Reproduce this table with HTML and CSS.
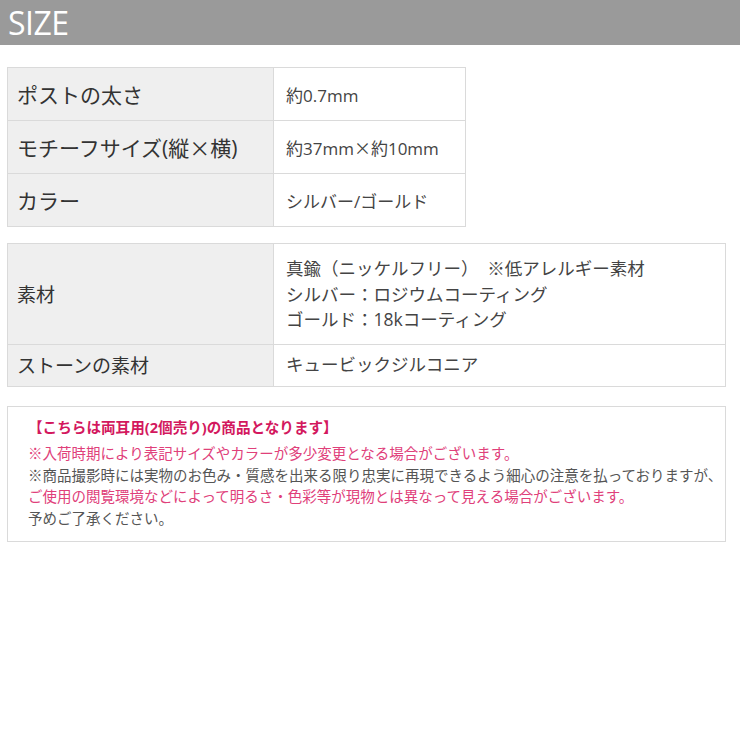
FILE: index.html
```html
<!DOCTYPE html>
<html lang="ja">

<head>
    <meta charset="UTF-8" />
    <meta name="viewport" content="width=device-width, initial-scale=1.0" />
    <title>SIZE</title>
    <link rel="stylesheet" href="styles.css">
</head>

<body>
    <h2 class="heading">SIZE</h2>

    <div class="content">
        <table class="spec spec-size">
            <tr>
                <th>ポストの太さ</th>
                <td>約0.7mm</td>
            </tr>
            <tr>
                <th>モチーフサイズ(縦<span class="cjk">×</span>横)</th>
                <td>約37mm<span class="cjk">×</span>約10mm</td>
            </tr>
            <tr>
                <th>カラー</th>
                <td>シルバー/ゴールド</td>
            </tr>
        </table>

        <table class="spec spec-material">
            <tr>
                <th>素材</th>
                <td class="multi">真鍮（ニッケルフリー）　※低アレルギー素材<br>シルバー：ロジウムコーティング<br>ゴールド：18kコーティング</td>
            </tr>
            <tr>
                <th>ストーンの素材</th>
                <td>キュービックジルコニア</td>
            </tr>
        </table>

        <div class="notes">
            <p class="notes-title">【こちらは両耳用(2個売り)の商品となります】</p>
            <p class="pink">※入荷時期により表記サイズやカラーが多少変更となる場合がございます。</p>
            <p>※商品撮影時には実物のお色み・質感を出来る限り忠実に再現できるよう細心の注意を払っておりますが、</p>
            <p class="pink">ご使用の閲覧環境などによって明るさ・色彩等が現物とは異なって見える場合がございます。</p>
            <p>予めご了承ください。</p>
        </div>
    </div>
</body>

</html>
```

FILE: styles.css
```css
body {
    margin: 0;
    font-family: "Open Sans", "Noto Sans CJK JP", sans-serif;
    color: #333;
    background-color: #fff;
}

.heading {
    margin: 0;
    height: 45px;
    padding-left: 8px;
    background-color: #9a9a9a;
    color: #fff;
    font-size: 32px;
    font-weight: normal;
    line-height: 45px;
    letter-spacing: -0.5px;
}

.content {
    padding: 22px 14px 0 7px;
}

.cjk {
    font-family: "Noto Sans CJK JP", sans-serif;
}

.spec {
    border-collapse: collapse;
    margin-bottom: 16px;
}

.spec th,
.spec td {
    border: 1px solid #dadada;
    text-align: left;
    vertical-align: middle;
}

.spec th {
    width: 256px;
    padding: 0 0 0 9px;
    background-color: #efefef;
    font-weight: normal;
    color: #333;
}

.spec td {
    padding: 0 0 0 12px;
    color: #444;
}

.spec-size {
    width: 459px;
}

.spec-size th {
    height: 52px;
    font-size: 21px;
}

.spec-size td {
    font-size: 17px;
}

.spec-material {
    width: 719px;
}

.spec-material th {
    height: 41px;
    font-size: 19px;
}

.spec-material td {
    font-size: 17.5px;
    line-height: 25.5px;
}

.spec-material td.multi {
    padding-top: 12px;
    padding-bottom: 11px;
}

.notes {
    margin-top: 19px;
    border: 1px solid #dadada;
    padding: 10px 20px 12px 20px;
    font-size: 14.5px;
    line-height: 21.5px;
    color: #555;
}

.notes p {
    margin: 0;
    white-space: nowrap;
}

.notes .notes-title {
    margin-bottom: 5px;
    font-size: 14.6px;
    font-weight: bold;
    color: #d3185e;
}

.notes .pink {
    color: #e0407a;
}
```
